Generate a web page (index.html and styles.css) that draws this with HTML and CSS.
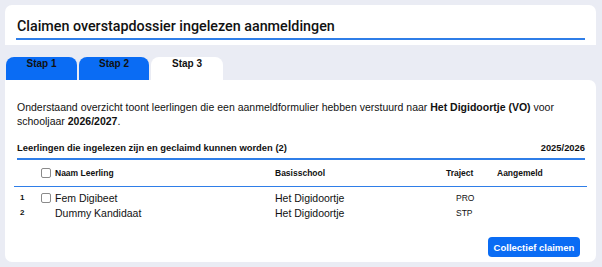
FILE: index.html
```html
<!DOCTYPE html>
<html>
<head>
<meta charset="utf-8">
<link rel="stylesheet" href="styles.css">
</head>
<body>
<div class="page">
  <header class="head-card">
    <h1 class="title">Claimen overstapdossier ingelezen aanmeldingen</h1>
  </header>
  <nav class="tabs">
    <div class="tab">Stap 1</div>
    <div class="tab">Stap 2</div>
    <div class="tab active">Stap 3</div>
  </nav>
  <section class="panel">
    <p class="intro">Onderstaand overzicht toont leerlingen die een aanmeldformulier hebben verstuurd naar <b>Het Digidoortje (VO)</b> voor schooljaar <b>2026/2027</b>.</p>
    <div class="subhead">
      <span>Leerlingen die ingelezen zijn en geclaimd kunnen worden (2)</span>
      <span>2025/2026</span>
    </div>
    <div class="table">
      <div class="row head">
        <span class="num"></span>
        <span class="chk"><span class="box"></span></span>
        <span class="name">Naam Leerling</span>
        <span class="school">Basisschool</span>
        <span class="traject">Traject</span>
        <span class="aangemeld">Aangemeld</span>
      </div>
      <div class="rows">
        <div class="row">
          <span class="num">1</span>
          <span class="chk"><span class="box"></span></span>
          <span class="name">Fem Digibeet</span>
          <span class="school">Het Digidoortje</span>
          <span class="traject code">PRO</span>
          <span class="aangemeld"></span>
        </div>
        <div class="row">
          <span class="num">2</span>
          <span class="chk"></span>
          <span class="name">Dummy Kandidaat</span>
          <span class="school">Het Digidoortje</span>
          <span class="traject code">STP</span>
          <span class="aangemeld"></span>
        </div>
      </div>
    </div>
    <div class="actions">
      <button class="btn">Collectief claimen</button>
    </div>
  </section>
</div>
</body>
</html>
```
FILE: styles.css
```css
html, body {
  margin: 0;
  padding: 0;
  background: #eaecf4;
  font-family: "Liberation Sans", Arial, sans-serif;
  color: #111;
}
.page {
  padding: 5px 6px 5px 5px;
  display: flex;
  flex-direction: column;
}
.head-card {
  background: #fff;
  border-radius: 7px 7px 0 0;
  padding: 11px 11px 0 11px;
  height: 29px;
}
.title {
  margin: 0;
  font-family: Roboto, "Liberation Sans", sans-serif;
  font-weight: 500;
  font-size: 14.3px;
  line-height: 20px;
  border-bottom: 2px solid #2f7ee8;
  padding-left: 1px;
  padding-bottom: 2px;
  color: #111;
}
.tabs {
  display: flex;
  gap: 2px;
  margin-top: 12px;
  padding-left: 1px;
}
.tab {
  width: 71px;
  height: 23px;
  background: #0a6cf4;
  border-radius: 8px 8px 0 0;
  font-weight: bold;
  font-size: 10px;
  text-align: center;
  line-height: 14px;
  color: #111;
}
.tab.active {
  background: #fff;
  width: 72px;
}
.tab:nth-child(2) {
  width: 70px;
}
.panel {
  background: #fff;
  border-radius: 0 7px 7px 7px;
  padding: 20px 11px 0 12px;
  height: 182px;
  box-sizing: border-box;
}
.intro {
  margin: 0;
  font-size: 10.5px;
  line-height: 14px;
}
.subhead {
  display: flex;
  justify-content: space-between;
  margin-top: 13px;
  font-weight: bold;
  font-size: 9.4px;
  line-height: 14px;
  padding-bottom: 3px;
  border-bottom: 2px solid #2f7ee8;
}
.table {
  margin: 0 -2px 0 -3px;
}
.row {
  display: flex;
  align-items: center;
}
.row.head {
  height: 26px;
  font-weight: bold;
  font-size: 8.5px;
  border-bottom: 1px solid #2f7ee8;
}
.rows {
  padding-top: 3px;
}
.rows .row {
  height: 15px;
  font-size: 10.5px;
}
.num {
  width: 24px;
  padding-left: 6px;
  font-size: 8px;
  font-weight: bold;
  box-sizing: border-box;
}
.chk {
  width: 14px;
  padding-left: 3px;
  display: flex;
  align-items: center;
}
.box {
  width: 8px;
  height: 8px;
  border: 1px solid #8a8a8a;
  border-radius: 2px;
  background: #fff;
}
.name {
  width: 220px;
}
.school {
  width: 171px;
}
.traject {
  width: 51px;
}
.code {
  font-size: 8.5px;
  padding-left: 10px;
  box-sizing: border-box;
}
.actions {
  display: flex;
  justify-content: flex-end;
  margin-top: 17px;
  padding-right: 5px;
}
.btn {
  border: none;
  background: #0a6cf4;
  color: #fff;
  font-family: "Liberation Sans", Arial, sans-serif;
  font-weight: bold;
  font-size: 9.5px;
  padding: 0 5px;
  width: 92px;
  white-space: nowrap;
  height: 20px;
  border-radius: 4px;
}
```
